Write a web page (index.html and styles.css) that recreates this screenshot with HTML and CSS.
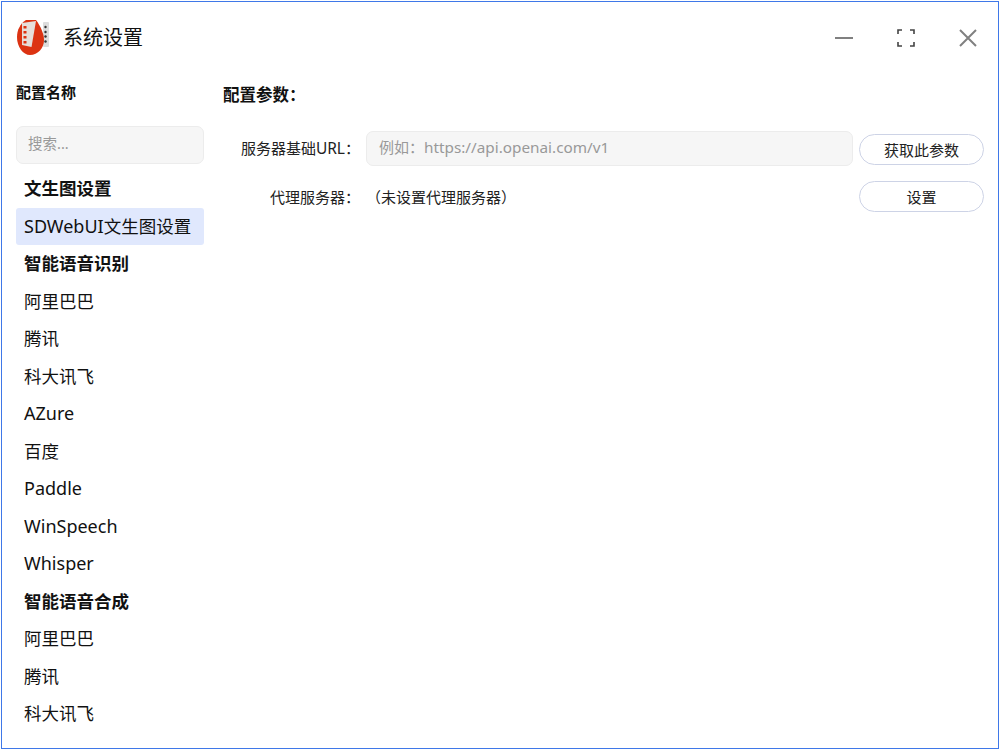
FILE: index.html
```html
<!DOCTYPE html>
<html lang="zh">
<head>
<meta charset="utf-8">
<title>系统设置</title>
<link rel="stylesheet" href="styles.css">
</head>
<body>
<div class="window">
  <header class="titlebar">
    <svg class="logo" width="34" height="35" viewBox="0 0 34 35">
      <rect x="27" y="2" width="6" height="25" rx="1" fill="#dcdcdc"/>
      <circle cx="29.5" cy="7" r="1.2" fill="#333"/><circle cx="29.5" cy="12" r="1.2" fill="#333"/><circle cx="29.5" cy="16.5" r="1.2" fill="#333"/><circle cx="29.5" cy="21.5" r="1.2" fill="#333"/>
      <path d="M10 0C4 4 1 10 1 17c0 10 6 18 13 18 8 0 14-7 14-15 0-6-3-13-8-20z" fill="#dc3312"/>
      <path d="M6 3L20 1L15.500 27L6 25z" fill="#e6dfdb"/>
      <g fill="#dc3312"><rect x="7.500" y="6" width="3" height="2.500"/><rect x="7.500" y="11" width="3" height="2.500"/><rect x="7.500" y="16" width="3" height="2.500"/><rect x="7.500" y="21" width="3" height="2.500"/></g>
    </svg>
    <h1 class="title">系统设置</h1>
    <div class="controls">
      <svg class="ctl" width="20" height="20" viewBox="0 0 20 20"><rect x="1" y="9" width="18" height="2" fill="#808080"/></svg>
      <svg class="ctl" width="20" height="20" viewBox="0 0 20 20"><path d="M2 6V2h4M14 2h4v4M18 14v4h-4M6 18H2v-4" fill="none" stroke="#444" stroke-width="1.6"/></svg>
      <svg class="ctl" width="20" height="20" viewBox="0 0 20 20"><path d="M2 2l16 16M18 2L2 18" fill="none" stroke="#808080" stroke-width="2"/></svg>
    </div>
  </header>
  <div class="body">
    <aside class="sidebar">
      <div class="side-title">配置名称</div>
      <div class="search">搜索...</div>
      <ul class="list">
        <li class="group">文生图设置</li>
        <li class="selected"><span class="latin">SDWebUI</span>文生图设置</li>
        <li class="group">智能语音识别</li>
        <li>阿里巴巴</li>
        <li>腾讯</li>
        <li>科大讯飞</li>
        <li class="latin">AZure</li>
        <li>百度</li>
        <li class="latin">Paddle</li>
        <li class="latin">WinSpeech</li>
        <li class="latin">Whisper</li>
        <li class="group">智能语音合成</li>
        <li>阿里巴巴</li>
        <li>腾讯</li>
        <li>科大讯飞</li>
      </ul>
    </aside>
    <main class="main">
      <h2 class="main-title">配置参数：</h2>
      <div class="row row-input">
        <label class="label label-high">服务器基础<span class="label-latin">URL</span>：</label>
        <div class="input">例如：<span class="input-latin">https://api.openai.com/v1</span></div>
        <button class="btn">获取此参数</button>
      </div>
      <div class="row row-proxy">
        <label class="label">代理服务器：</label>
        <div class="value">（未设置代理服务器）</div>
        <button class="btn">设置</button>
      </div>
    </main>
  </div>
</div>
</body>
</html>
```
FILE: styles.css
```css
* { box-sizing: border-box; }
html, body { margin: 0; padding: 0; background: #fff; }
body {
  width: 1000px;
  height: 750px;
  overflow: hidden;
  font-family: "Noto Sans", "Noto Sans CJK SC", sans-serif;
  color: #111;
}
.window {
  margin: 1px;
  width: 998px;
  height: 748px;
  border: 1px solid #3f78e8;
  background: #fff;
  overflow: hidden;
}
.titlebar {
  display: flex;
  align-items: center;
  height: 71px;
  padding: 0 11px 0 14px;
}
.logo { flex: none; }
.title {
  margin: 0 0 0 13px;
  font-size: 20px;
  font-weight: 400;
  line-height: 28px;
}
.controls {
  margin-left: auto;
  display: flex;
  gap: 42px;
  padding-right: 9px;
}
.body { display: flex; }
.sidebar { width: 188px; margin-left: 14px; flex: none; }
.side-title {
  font-size: 15px;
  font-weight: 700;
  line-height: 20px;
  margin-top: 9px;
}
.search {
  margin-top: 24px;
  height: 38px;
  border: 1px solid #ececec;
  border-radius: 7px;
  background: #f6f6f6;
  color: #999;
  font-size: 14.5px;
  line-height: 32px;
  padding-left: 11px;
}
.list { list-style: none; margin: 6px 0 0; padding: 0; }
.list li {
  height: 37.5px;
  line-height: 37.5px;
  padding-top: 0.25px;
  padding-left: 8px;
  font-size: 17.5px;
  border-radius: 3px;
  white-space: nowrap;
}
.list .latin { font-size: 18px; }
.list .group { font-weight: 700; }
.list .selected { background: #e0e8fd; }
.main { flex: 1; padding: 0 14px 0 19px; min-width: 0; }
.main-title {
  margin: 10px 0 0;
  font-size: 16.5px;
  font-weight: 700;
  line-height: 24px;
}
.row { display: flex; align-items: center; }
.row-input { margin-top: 24px; height: 35px; }
.row-proxy { margin-top: 15px; height: 31px; }
.label {
  width: 137px;
  margin-right: 6px;
  flex: none;
  text-align: right;
  font-size: 15px;
  line-height: 20px;
  color: #222;
  white-space: nowrap;
}
.label-high { position: relative; top: -1px; }
.label-latin { font-size: 15.5px; }
.input {
  flex: 1;
  height: 35px;
  margin-right: 6px;
  border: 1px solid #ececec;
  border-radius: 7px;
  background: #f6f6f6;
  color: #999;
  font-size: 15px;
  line-height: 30px;
  padding-left: 12px;
}
.input-latin { font-size: 15.3px; }
.value {
  flex: 1;
  margin-right: 6px;
  font-size: 15px;
  line-height: 20px;
  color: #222;
}
.btn {
  width: 125px;
  height: 31px;
  flex: none;
  border: 1px solid #cdd3e6;
  border-radius: 16px;
  background: #fff;
  font: inherit;
  font-size: 15px;
  color: #222;
  padding: 0;
}
.row-input .btn { position: relative; top: 1px; }
```
